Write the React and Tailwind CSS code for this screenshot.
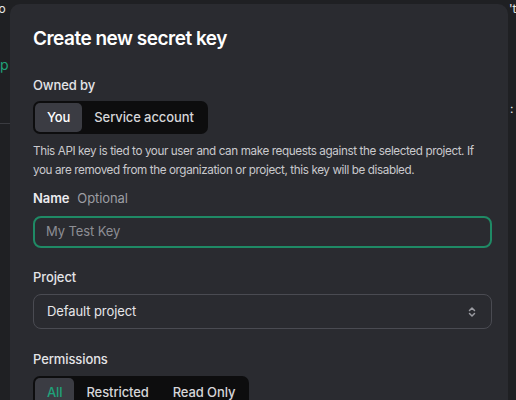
import React from "react";

const Segmented = ({ items, active, accent }) => (
  <div className="inline-flex items-center rounded-[7px] bg-[#0d0d0e] p-[2px]">
    {items.map((item) => (
      <div
        key={item}
        className={`h-[29px] flex items-center rounded-[5px] px-[12px] text-[13px] tracking-[-0.1px] font-medium ${
          item === active
            ? `bg-[#3b3c43] ${accent ? "text-[#1fa37a]" : "text-white"}`
            : "text-[#d6d6d9]"
        }`}
      >
        {item}
      </div>
    ))}
  </div>
);

const Chevrons = () => (
  <svg width="10" height="12" viewBox="0 0 10 12" fill="none" stroke="#9a9ba1" strokeWidth="1.5" strokeLinecap="round" strokeLinejoin="round">
    <path d="M2.5 4.5 5 2l2.5 2.5" />
    <path d="M2.5 7.5 5 10l2.5-2.5" />
  </svg>
);

export default function App() {
  return (
    <div
      className="relative w-[516px] h-[400px] overflow-hidden bg-[#1f2023]"
      style={{ fontFamily: "Inter, 'Noto Sans', sans-serif" }}
    >
      {/* page behind the dialog */}
      <div className="absolute left-[-14px] top-[0px] text-[12px] text-[#e6e6e6] whitespace-nowrap">is o</div>
      <div className="absolute left-[-12px] top-[54px] text-[14px] text-[#1fa37a] whitespace-nowrap">e p</div>
      <div className="absolute left-0 top-[123px] w-[10px] h-px bg-[#3a3b40]" />
      <div className="absolute left-[509px] top-[0px] text-[12px] text-[#e6e6e6] whitespace-nowrap">'t</div>
      <div className="absolute left-[510px] top-[100px] text-[12px] text-[#e6e6e6] whitespace-nowrap">:</div>

      {/* dialog */}
      <div className="absolute left-[10px] top-[4px] w-[498px] h-[420px] rounded-t-[10px] bg-[#2a2b30] px-[23px] pt-[22px] flex flex-col items-start">
        <h2 className="text-[19px] font-semibold text-white leading-[26px] tracking-[-0.5px]">
          Create new secret key
        </h2>

        <div className="mt-[24px] text-[13px] tracking-[-0.1px] font-medium text-[#e4e4e7] leading-[18px]">Owned by</div>
        <div className="mt-[7px]">
          <Segmented items={["You", "Service account"]} active="You" />
        </div>

        <p className="mt-[8px] text-[11.7px] leading-[19px] tracking-[-0.4px] text-[#c9c9cd]">
          This API key is tied to your user and can make requests against the selected project. If
          you are removed from the organization or project, this key will be disabled.
        </p>

        <div className="mt-[9px] flex items-baseline gap-[8px] text-[13px] tracking-[-0.1px] leading-[18px]">
          <span className="font-semibold text-[#ececef]">Name</span>
          <span className="text-[#9c9da3]">Optional</span>
        </div>
        <div className="mt-[9px] h-[32px] w-[459px] rounded-[8px] border-2 border-[#1f8a65] flex items-center px-[11px]">
          <span className="text-[13px] tracking-[-0.1px] text-[#8d8e94]">My Test Key</span>
        </div>

        <div className="mt-[20px] text-[13px] tracking-[-0.1px] font-medium text-[#e4e4e7] leading-[18px]">Project</div>
        <div className="mt-[8px] h-[35px] w-[459px] rounded-[8px] border border-[#4a4b52] flex items-center justify-between pl-[13px] pr-[14px]">
          <span className="text-[13px] tracking-[-0.1px] text-[#e6e6e9]">Default project</span>
          <Chevrons />
        </div>

        <div className="mt-[21px] text-[13px] tracking-[-0.1px] font-medium text-[#e4e4e7] leading-[18px]">Permissions</div>
        <div className="mt-[8px]">
          <Segmented items={["All", "Restricted", "Read Only"]} active="All" accent />
        </div>
      </div>
    </div>
  );
}
